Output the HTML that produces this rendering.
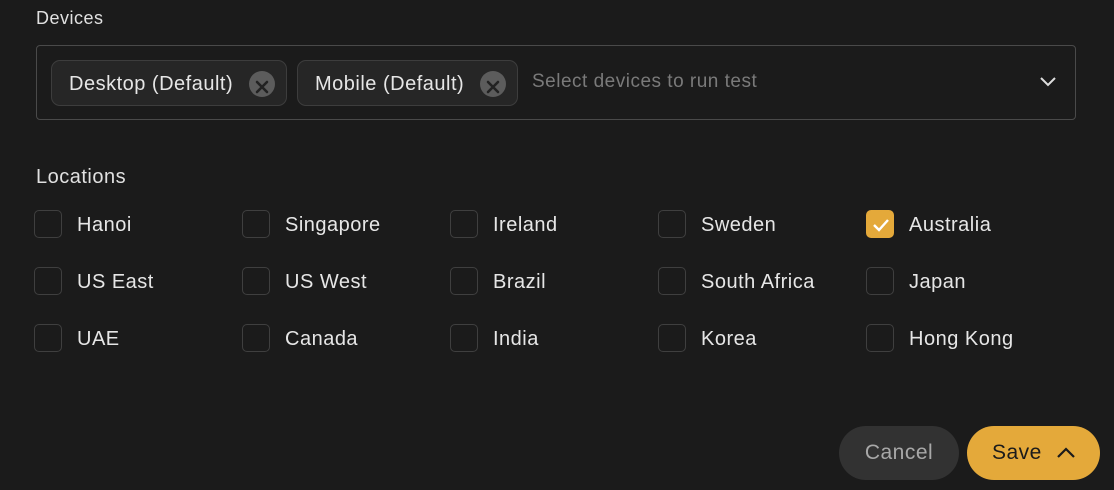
<!DOCTYPE html><html><head><style>
body{margin:0;width:1114px;height:490px;background:#1b1b1b;font-family:"Liberation Sans",sans-serif;color:#e6e6e6;position:relative;overflow:hidden;letter-spacing:0.5px}
.a{position:absolute}
.lbl{font-size:18px;color:#e0e0e0}
.box{position:absolute;left:36px;top:45px;width:1038px;height:73px;border:1px solid #4a4a4a;border-radius:4px}
.chip{position:absolute;top:14px;height:46px;border:1px solid #3d3d3d;border-radius:9px;background:#262626;font-size:20px;line-height:46px;padding-left:17px;box-sizing:border-box}
.x{position:absolute;top:10px;width:26px;height:26px;border-radius:50%;background:#5c5c5c}
.cb{position:absolute;width:28px;height:28px;border:1px solid #3f3f3f;border-radius:5px;box-sizing:border-box}
.t{position:absolute;font-size:20px;line-height:28px}
</style></head><body>
<div class="a lbl" style="left:36px;top:8px">Devices</div>
<div class="box">
<div class="chip" style="left:14px;width:236px">Desktop (Default)<div class="x" style="left:197px"><svg width="26" height="26"><path d="M8 8L18 18M18 8L8 18" stroke="#222" stroke-width="2.6" stroke-linecap="round"/></svg></div></div>
<div class="chip" style="left:260px;width:221px">Mobile (Default)<div class="x" style="left:182px"><svg width="26" height="26"><path d="M8 8L18 18M18 8L8 18" stroke="#222" stroke-width="2.6" stroke-linecap="round"/></svg></div></div>
<div class="a" style="left:495px;top:25px;font-size:19px;color:#7a7a7a">Select devices to run test</div>
<svg class="a" style="left:1002px;top:29px" width="18" height="14"><path d="M2 3L9 10L16 3" stroke="#ddd" stroke-width="2" fill="none"/></svg>
</div>
<div class="a lbl" style="left:36px;top:166px;font-size:20px">Locations</div>
<div id="g"></div>
<script>
var n=[["Hanoi","Singapore","Ireland","Sweden","Australia"],["US East","US West","Brazil","South Africa","Japan"],["UAE","Canada","India","Korea","Hong Kong"]],h="";
for(var r=0;r<3;r++)for(var c=0;c<5;c++){var x=34+208*c,y=210+57*r,on=(r==0&&c==4);
h+='<div class="cb" style="left:'+x+'px;top:'+y+'px;'+(on?'background:#e4a93a;border-color:#e4a93a':'')+'">'+(on?'<svg width="28" height="28"><path d="M7 14L12 19L21 9" stroke="#fff" stroke-width="2.4" fill="none"/></svg>':'')+'</div><div class="t" style="left:'+(x+43)+'px;top:'+(y+1)+'px">'+n[r][c]+'</div>';}
document.getElementById("g").innerHTML=h;
</script>
<div class="a" style="left:839px;top:426px;width:120px;height:54px;border-radius:27px;background:#323232;color:#a8a8a8;font-size:21px;line-height:54px;text-align:center">Cancel</div>
<div class="a" style="left:967px;top:426px;width:133px;height:54px;border-radius:27px;background:#e4a93a;color:#1b1b1b;font-size:21px;line-height:54px"><span style="position:absolute;left:25px">Save</span><svg class="a" style="left:88px;top:19px" width="22" height="14"><path d="M3 12L11 4L19 12" stroke="#1b1b1b" stroke-width="2.2" fill="none"/></svg></div>
</body></html>
